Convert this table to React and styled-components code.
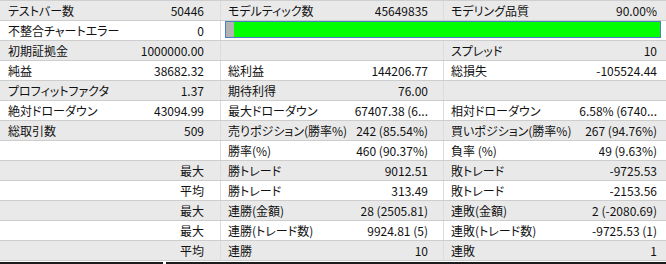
import React from 'react';
import styled, { createGlobalStyle } from 'styled-components';

const GlobalStyle = createGlobalStyle`
    html, body {
        margin: 0;
        padding: 0;
        background: #ffffff;
    }
    body {
        font-family: "Noto Sans CJK JP", "Noto Sans", sans-serif;
        font-size: 12px;
        font-feature-settings: "palt";
        color: #111111;
    }
`;

const rows = [
    [['テストバー数', '50446'], ['モデルティック数', '45649835'], ['モデリング品質', '90.00%']],
    'bar',
    [['初期証拠金', '1000000.00'], ['', ''], ['スプレッド', '10']],
    [['純益', '38682.32'], ['総利益', '144206.77'], ['総損失', '-105524.44']],
    [['プロフィットファクタ', '1.37'], ['期待利得', '76.00'], ['', '']],
    [['絶対ドローダウン', '43094.99'], ['最大ドローダウン', '67407.38 (6...'], ['相対ドローダウン', '6.58% (6740...']],
    [['総取引数', '509'], ['売りポジション(勝率%)', '242 (85.54%)'], ['買いポジション(勝率%)', '267 (94.76%)']],
    [['', ''], ['勝率(%)', '460 (90.37%)'], ['負率 (%)', '49 (9.63%)']],
    [['', '最大'], ['勝トレード', '9012.51'], ['敗トレード', '-9725.53']],
    [['', '平均'], ['勝トレード', '313.49'], ['敗トレード', '-2153.56']],
    [['', '最大'], ['連勝(金額)', '28 (2505.81)'], ['連敗(金額)', '2 (-2080.69)']],
    [['', '最大'], ['連勝(トレード数)', '9924.81 (5)'], ['連敗(トレード数)', '-9725.53 (1)']],
    [['', '平均'], ['連勝', '10'], ['連敗', '1']],
];

const App = () => {
    return (
        <>
            <GlobalStyle />
            <Table>
                {rows.map((row, i) => (
                    <Row key={i} $shaded={i % 2 === 0}>
                        {row === 'bar' ? (
                            <>
                                <Cell $col={0}>
                                    <Label>不整合チャートエラー</Label>
                                    <Value>0</Value>
                                </Cell>
                                <BarCell>
                                    <Bar>
                                        <BarStart />
                                        <BarFill />
                                    </Bar>
                                </BarCell>
                            </>
                        ) : (
                            row.map(([label, value], c) => (
                                <Cell key={c} $col={c}>
                                    <Label>{label}</Label>
                                    <Value>{value}</Value>
                                </Cell>
                            ))
                        )}
                    </Row>
                ))}
            </Table>
            <Footer>
                <FooterLine $w="163px" />
                <FooterLine $w="auto" />
            </Footer>
        </>
    );
};

const Table = styled.div`
    width: 666px;
    border-top: 1px solid #cfcfcf;
`;

const Row = styled.div`
    display: grid;
    grid-template-columns: 221px 223px 222px;
    height: 19px;
    border-bottom: 1px solid #cdcdcd;
    background: ${p => (p.$shaded ? '#e9e9e9' : '#ffffff')};
`;

const pads = ['0 16px 0 8px', '0 15px 0 7px', '0 9px 0 7px'];

const Cell = styled.div`
    display: flex;
    align-items: center;
    justify-content: space-between;
    gap: 6px;
    padding: ${p => pads[p.$col]};
    box-sizing: border-box;
    min-width: 0;
    line-height: 19px;
    white-space: nowrap;
    border-right: ${p => (p.$col < 2 ? '1px solid #dcdcdc' : 'none')};
`;

const Label = styled.span`
    flex: 0 0 auto;
`;

const Value = styled.span`
    text-align: right;
    overflow: hidden;
    text-overflow: clip;
`;

const BarCell = styled.div`
    grid-column: 2 / 4;
    display: flex;
    padding: 0 5px 2px 4px;
`;

const Bar = styled.div`
    flex: 1;
    display: flex;
    border: 1px solid #4a7fc1;
    box-sizing: border-box;
`;

const BarStart = styled.div`
    width: 8px;
    background: #b3b3b3;
`;

const BarFill = styled.div`
    flex: 1;
    background: #00ff00;
`;

const Footer = styled.div`
    display: flex;
    gap: 3px;
    margin-top: 1px;
    width: 666px;
`;

const FooterLine = styled.div`
    height: 2px;
    width: ${p => p.$w};
    flex: ${p => (p.$w === 'auto' ? '1' : '0 0 auto')};
    background: #1c1c1c;
`;

export default App;
